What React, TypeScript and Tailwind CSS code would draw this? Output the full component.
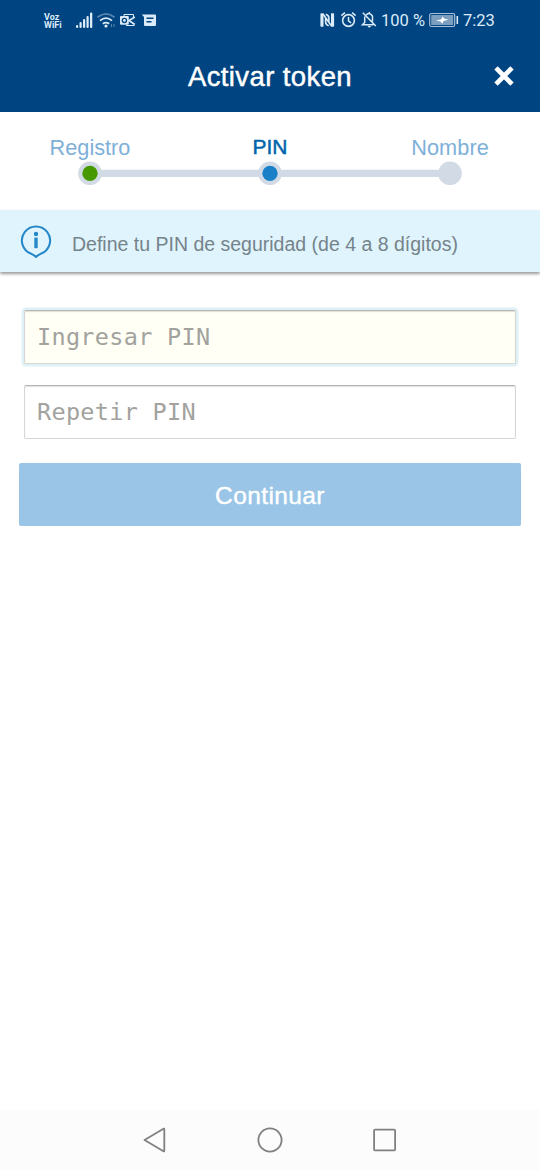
const SANS = "font-['Liberation_Sans',sans-serif]";

function StatusBar() {
  return (
    <div className="flex h-10 items-center justify-between pl-[44px] pr-[45px] text-[#dcebf8]">
      <div className="flex h-10 items-center">
        <div className="w-[31px] pt-px font-['Roboto',sans-serif] text-[9px] font-bold leading-[8px]">
          <div>Voz</div>
          <div>WiFi</div>
        </div>
        <svg className="h-10 w-[84px]" viewBox="75 0 84 40" fill="currentColor">
          <rect x="76" y="25" width="2.2" height="3" rx="1" />
          <rect x="79.5" y="22" width="2.2" height="6" rx="1" />
          <rect x="83" y="19" width="2.2" height="9" rx="1" />
          <rect x="86.5" y="16" width="2.2" height="12" rx="1" />
          <rect x="90" y="12.5" width="2.3" height="15.5" rx="1" />
          <g fill="none" stroke="currentColor" strokeWidth="1.8">
            <path d="M97.5 17.2Q106 10.6 114.5 17.2" opacity=".4" />
            <path d="M100 20.6Q106 15.6 112 20.6" />
            <path d="M102.8 23.8Q106 21.4 109.2 23.8" />
          </g>
          <circle cx="106" cy="26" r="1.6" />
          <path d="M111.5 24v3M114 24v3" stroke="currentColor" strokeWidth="1" opacity=".4" />
          <path d="M124 16v-1.5h9.5v3M126 25.5h8.5" fill="none" stroke="currentColor" strokeWidth="1" />
          <path d="M134.8 17l-5.8 3.5 5.8 4" fill="none" stroke="currentColor" strokeWidth="1.6" />
          <rect x="120" y="16" width="8.8" height="8.8" rx="1" />
          <circle cx="124.4" cy="20.4" r="2.1" fill="none" stroke="#004481" strokeWidth="1.3" />
          <path d="M141.8 14.5H155a1 1 0 0 1 1 1V25a1 1 0 0 1-1 1h-10a1 1 0 0 1-1-1v-8z" />
          <path d="M146.5 18.3h7M146.5 21.8h5" stroke="#004481" strokeWidth="1.5" />
        </svg>
      </div>
      <div className="flex h-10 items-center font-['Roboto',sans-serif] text-[17px]">
        <svg className="h-10 w-[62px]" viewBox="319 0 62 40" fill="none" stroke="currentColor">
          <path d="M323.5 13.3h-2.3q-.8 0-.8.8v11.8q0 .8.8.8h2.3zM331 13.3h2.3q.8 0 .8.8v11.8q0 .8-.8.8H331z" fill="currentColor" stroke="none" />
          <path d="M323 14l8.5 12M325.8 14.2q3.1 1 3.1 4v3.4M328.7 25.8q-3.1-1-3.1-4v-3.4" strokeWidth="1.6" />
          <circle cx="348.5" cy="20.5" r="5.9" strokeWidth="1.6" />
          <path d="M348.5 17v3.8l2.6 2M341.3 15.6l3.6-3M355.7 15.6l-3.6-3" strokeWidth="1.5" />
          <path d="M364.7 16.5v6l-2.2 2.2h11M366.2 14.8q4-3 6.3 1.4v5.2M369.3 12v1.6M362.8 12.7l13 13.3" strokeWidth="1.5" />
          <path d="M367.5 26h3.6q-1.8 3-3.6 0" fill="currentColor" stroke="none" />
        </svg>
        <span className="w-[48px] whitespace-nowrap pt-[2px] text-[16.5px]">100 %</span>
        <svg className="h-10 w-[34px]" viewBox="429 0 34 40">
          <rect x="429.7" y="13.5" width="25" height="13" rx="1.8" fill="none" stroke="#a9c1d7" strokeWidth="1.2" />
          <rect x="431.2" y="15" width="22" height="10" rx=".6" fill="#7d9fbf" />
          <path d="M436 20.5l5.5-1.2.8-2.7 2.3 2.1 3.9 1.1-5 1.2-1 2.7-2.2-2.2z" fill="#fff" />
          <rect x="456.5" y="16" width="1.6" height="8" fill="currentColor" />
        </svg>
        <span className="w-[32px] whitespace-nowrap pt-[2px] text-[16.5px]">7:23</span>
      </div>
    </div>
  );
}

function Header() {
  return (
    <header className={`${SANS} grid h-[72px] grid-cols-[72px_1fr_72px] items-start text-white`}>
      <span />
      <h1 className="pt-[20px] text-center text-[27.5px] leading-[34px] tracking-[0.4px] [-webkit-text-stroke:0.45px_white]">
        Activar token
      </h1>
      <button className="flex justify-center pt-[25px]" aria-label="Cerrar">
        <svg className="h-[22px] w-[22px]" viewBox="0 0 22 22" stroke="currentColor" strokeWidth="4.8">
          <path d="M3 2.9l16 16.2M19 2.9L3 19.1" />
        </svg>
      </button>
    </header>
  );
}

function Stepper() {
  return (
    <section className={`${SANS} flex h-[97.5px] flex-col pt-[23px]`}>
      <div className="grid grid-cols-3 text-center text-[21.7px] leading-[25px] text-[#7eb0d8]">
        <span>Registro</span>
        <span className="-mt-px text-[21px] text-[#0065ac] [-webkit-text-stroke:0.5px_#0065ac]">PIN</span>
        <span className="tracking-[0.1px]">Nombre</span>
      </div>
      <svg className="mt-px h-6 w-full" viewBox="0 161 540 24">
        <path d="M90 173.4h360" stroke="#d2dbe5" strokeWidth="7.4" />
        <g fill="#d2dbe5">
          <circle cx="90" cy="173.4" r="11.8" />
          <circle cx="270" cy="173.4" r="11.8" />
          <circle cx="450" cy="173.4" r="11.8" />
        </g>
        <circle cx="90" cy="173.4" r="7.7" fill="#479902" />
        <circle cx="270" cy="173.4" r="7.7" fill="#1a80c7" />
      </svg>
    </section>
  );
}

function Notice() {
  return (
    <section className={`${SANS} flex h-[62.5px] items-start bg-[#dff4fc] pl-5 shadow-[0_2px_3px_rgba(0,0,0,0.4)]`}>
      <svg className="mt-[14px] h-9 w-8 shrink-0" viewBox="20 224 32 36" fill="none" stroke="#2587c8" strokeWidth="2">
        <path d="M31.3 253.8A14.1 14.1 0 1 1 40.7 253.8Q38 255 36 257Q34 255 31.3 253.8Z" strokeLinejoin="round" />
        <circle cx="36" cy="234" r="2.2" fill="#2587c8" stroke="none" />
        <path d="M36 237.6v10.6" strokeWidth="3.4" />
      </svg>
      <p className="ml-[20px] mt-[22.5px] whitespace-nowrap text-[19.5px] leading-6 text-[#76838b]">
        Define tu PIN de seguridad (de 4 a 8 dígitos)
      </p>
    </section>
  );
}

const inputBase =
  "block h-[54px] w-full rounded-[2px] border border-[#d6d6d6] border-t-[#b5b5b5] px-[12px] pb-0 pt-0 font-['DejaVu_Sans_Mono',monospace] text-[23.5px] tracking-[0.3px] shadow-[inset_0_1px_1px_rgba(0,0,0,0.12)] outline-none placeholder:text-[#a2a29e] placeholder:opacity-100";

function PinForm() {
  return (
    <main className="flex flex-1 flex-col px-[19px] pt-[37.5px]">
      <div className="px-[5px]">
        <input
          className={`${inputBase} bg-[#fffff5] ring-[2.5px] ring-[#dff1f5]`}
          placeholder="Ingresar PIN"
        />
        <input className={`${inputBase} mt-[21px] bg-white`} placeholder="Repetir PIN" />
      </div>
      <button
        className={`${SANS} mt-6 h-[63px] rounded-[2px] bg-[#9ac5e7] pt-[4px] text-[24.5px] tracking-[0.4px] text-white [-webkit-text-stroke:0.4px_white]`}
      >
        Continuar
      </button>
    </main>
  );
}

function NavigationBar() {
  return (
    <nav className="h-[60px] bg-[#fcfcfc]">
      <svg className="h-[60px] w-full" viewBox="0 0 540 60" fill="none" stroke="#808080" strokeWidth="1.8" strokeLinejoin="round">
        <path d="M144.5 30L163.5 18.7Q164.3 18.4 164.3 19.4V40.6Q164.3 41.6 163.5 41.3Z" />
        <circle cx="270" cy="30" r="11.6" />
        <rect x="374.1" y="19.6" width="21" height="20.8" rx="1" />
      </svg>
    </nav>
  );
}

export default function App() {
  return (
    <div className="flex h-[1170px] w-[540px] flex-col overflow-hidden bg-white">
      <div className="bg-[#004481]">
        <StatusBar />
        <Header />
      </div>
      <Stepper />
      <Notice />
      <PinForm />
      <NavigationBar />
    </div>
  );
}
